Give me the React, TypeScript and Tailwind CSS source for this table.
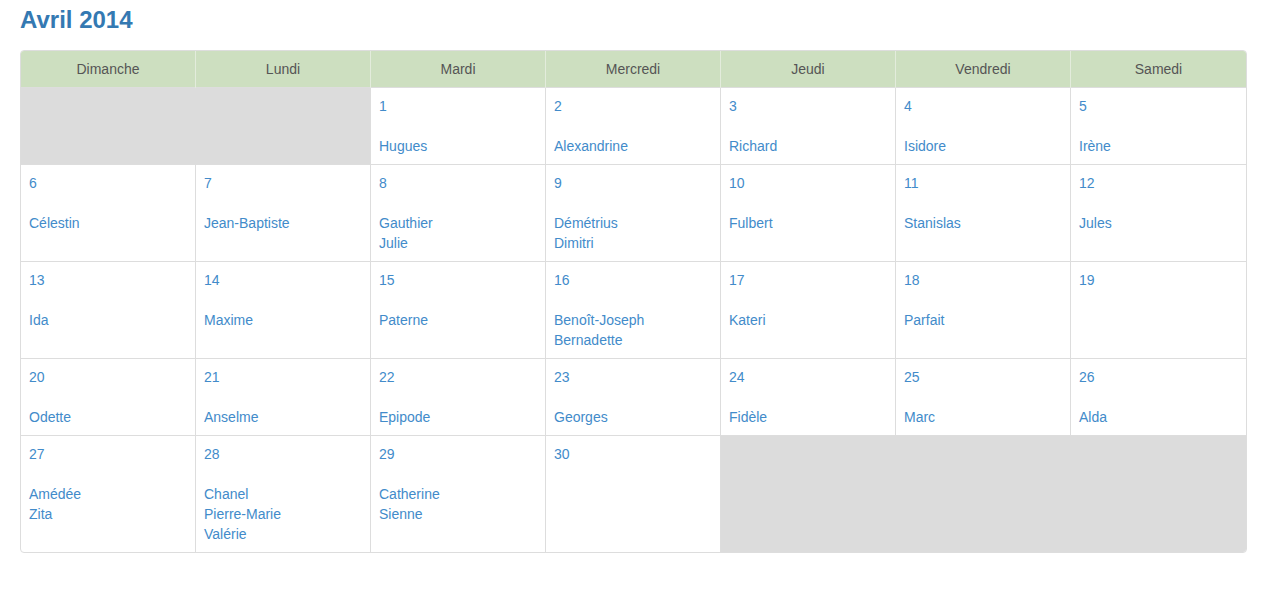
import React from "react";

type Cell = { day?: number; names?: string[]; empty?: number };

const headers = ["Dimanche", "Lundi", "Mardi", "Mercredi", "Jeudi", "Vendredi", "Samedi"];

const rows: Cell[][] = [
  [
    { empty: 2 },
    { day: 1, names: ["Hugues"] },
    { day: 2, names: ["Alexandrine"] },
    { day: 3, names: ["Richard"] },
    { day: 4, names: ["Isidore"] },
    { day: 5, names: ["Irène"] },
  ],
  [
    { day: 6, names: ["Célestin"] },
    { day: 7, names: ["Jean-Baptiste"] },
    { day: 8, names: ["Gauthier", "Julie"] },
    { day: 9, names: ["Démétrius", "Dimitri"] },
    { day: 10, names: ["Fulbert"] },
    { day: 11, names: ["Stanislas"] },
    { day: 12, names: ["Jules"] },
  ],
  [
    { day: 13, names: ["Ida"] },
    { day: 14, names: ["Maxime"] },
    { day: 15, names: ["Paterne"] },
    { day: 16, names: ["Benoît-Joseph", "Bernadette"] },
    { day: 17, names: ["Kateri"] },
    { day: 18, names: ["Parfait"] },
    { day: 19, names: [] },
  ],
  [
    { day: 20, names: ["Odette"] },
    { day: 21, names: ["Anselme"] },
    { day: 22, names: ["Epipode"] },
    { day: 23, names: ["Georges"] },
    { day: 24, names: ["Fidèle"] },
    { day: 25, names: ["Marc"] },
    { day: 26, names: ["Alda"] },
  ],
  [
    { day: 27, names: ["Amédée", "Zita"] },
    { day: 28, names: ["Chanel", "Pierre-Marie", "Valérie"] },
    { day: 29, names: ["Catherine", "Sienne"] },
    { day: 30, names: [] },
    { empty: 3 },
  ],
];

export default function App() {
  return (
    <div
      className="min-h-[591px] bg-white px-[20px] pt-[7px] text-[14px] leading-[20px] text-[#333]"
      style={{ fontFamily: '"Liberation Sans", Arial, Helvetica, sans-serif' }}
    >
      <h3 className="m-0 text-[24px] font-bold leading-[26px] text-[#3479b2]">Avril 2014</h3>
      <div className="mt-[17px] w-[1227px] overflow-hidden rounded-[4px] border border-[#dddddd]">
        <table className="w-full table-fixed border-collapse">
          <colgroup>
            <col className="w-[174.5px]" />
            <col className="w-[175px]" />
            <col className="w-[175px]" />
            <col className="w-[175px]" />
            <col className="w-[175px]" />
            <col className="w-[175px]" />
            <col />
          </colgroup>
          <thead>
            <tr className="bg-[#cddfc0]">
              {headers.map((h, i) => (
                <th
                  key={h}
                  className={
                    "h-[36px] p-0 text-center align-middle font-normal text-[#555555] " +
                    (i === 0 ? "" : "border-l border-[#e3ecdc]")
                  }
                >
                  {h}
                </th>
              ))}
            </tr>
          </thead>
          <tbody>
            {rows.map((row, ri) => {
              let col = 0;
              return (
                <tr key={ri}>
                  {row.map((c, ci) => {
                    const first = col === 0;
                    col += c.empty ?? 1;
                    if (c.empty) {
                      return (
                        <td
                          key={ci}
                          colSpan={c.empty}
                          className={
                            "bg-[#dcdcdc] p-0 border-t border-[#dddddd] " + (first ? "" : "border-l")
                          }
                        />
                      );
                    }
                    return (
                      <td
                        key={ci}
                        className={
                          "border-t border-[#dddddd] p-[8px] align-top " + (first ? "" : "border-l")
                        }
                      >
                        <div className="text-[#428bca]">{c.day}</div>
                        <div className="mt-[20px] min-h-[20px] text-[#428bca]">
                          {c.names!.map((n) => (
                            <div key={n}>{n}</div>
                          ))}
                        </div>
                      </td>
                    );
                  })}
                </tr>
              );
            })}
          </tbody>
        </table>
      </div>
    </div>
  );
}
